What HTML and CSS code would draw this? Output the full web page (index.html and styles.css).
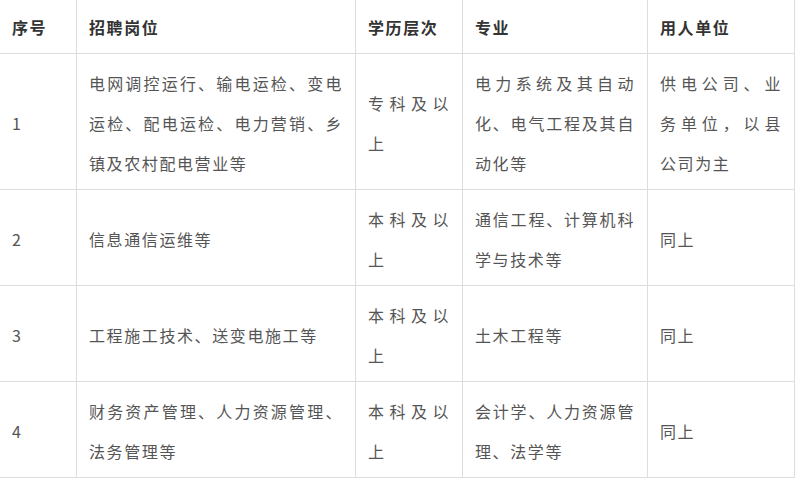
FILE: index.html
```html
<!DOCTYPE html>
<html lang="zh-CN">
<head>
<meta charset="utf-8">
<title>招聘岗位</title>
<link rel="stylesheet" href="styles.css">
</head>
<body>
<table class="jobs">
  <colgroup>
    <col class="c1"><col class="c2"><col class="c3"><col class="c4"><col class="c5">
  </colgroup>
  <thead>
    <tr><th>序号</th><th>招聘岗位</th><th>学历层次</th><th>专业</th><th>用人单位</th></tr>
  </thead>
  <tbody>
    <tr>
      <td>1</td>
      <td>电网调控运行、输电运检、变电运检、配电运检、电力营销、乡镇及农村配电营业等</td>
      <td>专科及以上</td>
      <td>电力系统及其自动化、电气工程及其自动化等</td>
      <td>供电公司、业务单位，以县公司为主</td>
    </tr>
    <tr>
      <td>2</td>
      <td>信息通信运维等</td>
      <td>本科及以上</td>
      <td>通信工程、计算机科学与技术等</td>
      <td>同上</td>
    </tr>
    <tr>
      <td>3</td>
      <td>工程施工技术、送变电施工等</td>
      <td>本科及以上</td>
      <td>土木工程等</td>
      <td>同上</td>
    </tr>
    <tr>
      <td>4</td>
      <td>财务资产管理、人力资源管理、法务管理等</td>
      <td>本科及以上</td>
      <td>会计学、人力资源管理、法学等</td>
      <td>同上</td>
    </tr>
  </tbody>
</table>
</body>
</html>
```
FILE: styles.css
```css
html, body {
  margin: 0;
  padding: 0;
  background: #fff;
}
.jobs {
  border-collapse: collapse;
  table-layout: fixed;
  width: 795px;
  margin: -3px 0 0 -1px;
  font-family: "Noto Sans CJK SC", "Noto Sans", sans-serif;
  font-size: 16px;
  letter-spacing: 1.6px;
  line-height: 40px;
  color: #555;
}
.c1 { width: 77px; }
.c2 { width: 279px; }
.c3 { width: 107px; }
.c4 { width: 185px; }
.c5 { width: 147px; }
.jobs th,
.jobs td {
  border: 1px solid #dedede;
  padding: 9px 12px 6px;
  vertical-align: middle;
  text-align: justify;
  word-break: normal;
}
.jobs th {
  font-weight: bold;
  color: #333;
  text-align: left;
}
```
